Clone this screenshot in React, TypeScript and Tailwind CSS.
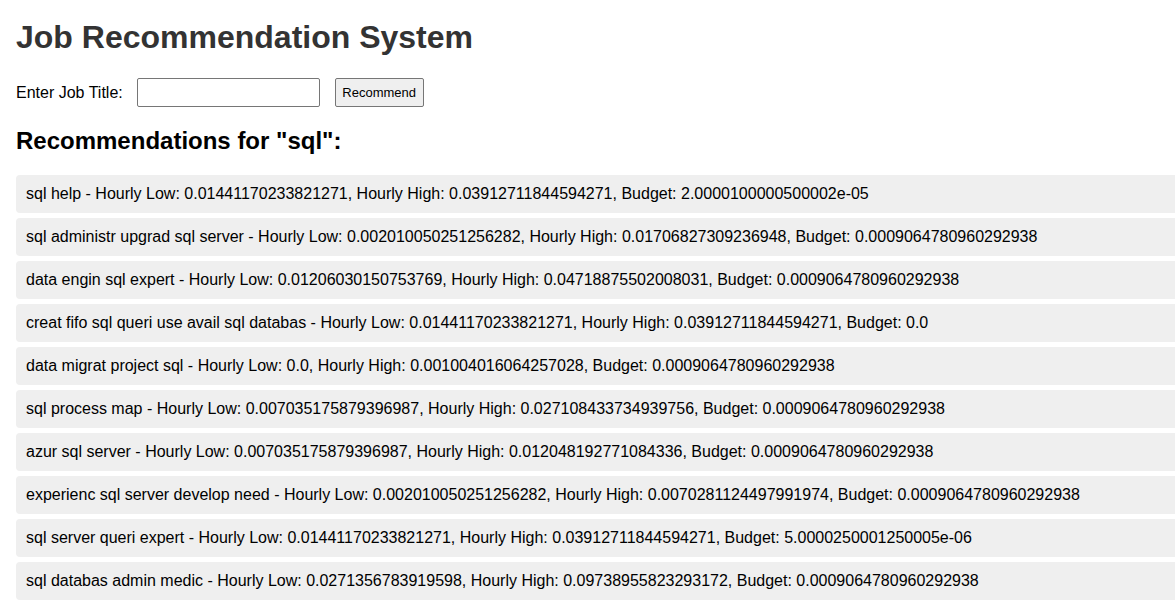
import React from "react";

const items = [
  "sql help - Hourly Low: 0.01441170233821271, Hourly High: 0.03912711844594271, Budget: 2.0000100000500002e-05",
  "sql administr upgrad sql server - Hourly Low: 0.002010050251256282, Hourly High: 0.01706827309236948, Budget: 0.0009064780960292938",
  "data engin sql expert - Hourly Low: 0.01206030150753769, Hourly High: 0.04718875502008031, Budget: 0.0009064780960292938",
  "creat fifo sql queri use avail sql databas - Hourly Low: 0.01441170233821271, Hourly High: 0.03912711844594271, Budget: 0.0",
  "data migrat project sql - Hourly Low: 0.0, Hourly High: 0.001004016064257028, Budget: 0.0009064780960292938",
  "sql process map - Hourly Low: 0.007035175879396987, Hourly High: 0.027108433734939756, Budget: 0.0009064780960292938",
  "azur sql server - Hourly Low: 0.007035175879396987, Hourly High: 0.012048192771084336, Budget: 0.0009064780960292938",
  "experienc sql server develop need - Hourly Low: 0.002010050251256282, Hourly High: 0.0070281124497991974, Budget: 0.0009064780960292938",
  "sql server queri expert - Hourly Low: 0.01441170233821271, Hourly High: 0.03912711844594271, Budget: 5.0000250001250005e-06",
  "sql databas admin medic - Hourly Low: 0.0271356783919598, Hourly High: 0.09738955823293172, Budget: 0.0009064780960292938",
];

export default function App() {
  return (
    <div className="min-h-[612px] w-full overflow-hidden bg-white pl-4 pt-[19px] text-black" style={{ fontFamily: '"Liberation Sans", Arial, sans-serif' }}>
      <h1 className="text-[32px] font-bold leading-[37px] text-[#333]">Job Recommendation System</h1>
      <div className="mt-[22px] flex items-center">
        <label className="text-[16px] leading-[18px]">Enter Job Title:</label>
        <input type="text" className="ml-[14px] h-[29px] w-[183px] rounded-[2px] border border-[#767676] bg-white px-1 text-[13px] outline-none" />
        <button className="ml-[15px] h-[29px] w-[89px] rounded-[2px] border border-[#767676] bg-[#efefef] text-[13px] text-black">Recommend</button>
      </div>
      <h2 className="mt-[20px] text-[24px] font-bold leading-[28px]">Recommendations for "sql":</h2>
      <ul className="mt-[20px] w-[calc(100%+20px)]">
        {items.map((t, i) => (
          <li key={i} className="mb-[5px] rounded-[4px] bg-[#efefef] px-[10px] py-[10px] text-[16px] leading-[18px] whitespace-nowrap">
            {t}
          </li>
        ))}
      </ul>
    </div>
  );
}
